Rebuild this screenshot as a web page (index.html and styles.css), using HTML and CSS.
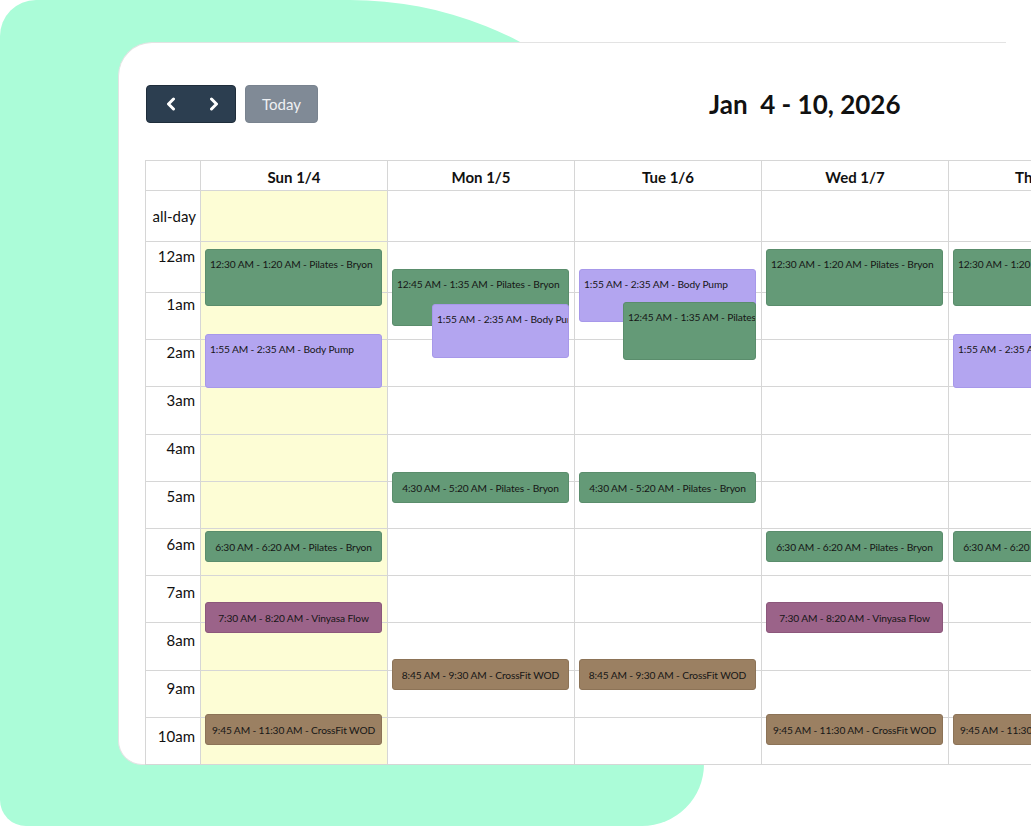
FILE: index.html
```html
<!DOCTYPE html>
<html lang="en">
<head>
<meta charset="utf-8">
<title>Week calendar</title>
<link rel="stylesheet" href="styles.css">
</head>
<body>
<div class="blob">
  <div class="card">
    <div class="toolbar">
      <div class="nav-group">
        <button class="nav-btn" aria-label="Previous week">
          <svg width="12" height="14" viewBox="0 0 12 14"><polyline points="8.5,2 3.5,7 8.5,12" fill="none" stroke="#fff" stroke-width="3" stroke-linecap="round" stroke-linejoin="round"/></svg>
        </button>
        <button class="nav-btn" aria-label="Next week">
          <svg width="12" height="14" viewBox="0 0 12 14"><polyline points="3.5,2 8.5,7 3.5,12" fill="none" stroke="#fff" stroke-width="3" stroke-linecap="round" stroke-linejoin="round"/></svg>
        </button>
      </div>
      <button class="today-btn">Today</button>
      <h2 class="title">Jan  4 - 10, 2026</h2>
    </div>

    <div class="cal">
      <div class="row head">
        <div class="cell axis"></div>
        <div class="cell">Sun 1/4</div>
        <div class="cell">Mon 1/5</div>
        <div class="cell">Tue 1/6</div>
        <div class="cell">Wed 1/7</div>
        <div class="cell">Thu 1/8</div>
        <div class="cell">Fri 1/9</div>
        <div class="cell">Sat 1/10</div>
      </div>
      <div class="row allday">
        <div class="cell axis">all-day</div>
        <div class="cell today"></div>
        <div class="cell"></div>
        <div class="cell"></div>
        <div class="cell"></div>
        <div class="cell"></div>
        <div class="cell"></div>
        <div class="cell"></div>
      </div>
      <div class="row body">
        <div class="axis-col">
          <div class="axis-lines">
            <div class="slot"></div><div class="slot"></div><div class="slot"></div><div class="slot"></div><div class="slot"></div><div class="slot"></div><div class="slot"></div><div class="slot"></div><div class="slot"></div><div class="slot"></div><div class="slot"></div>
          </div>
          <div class="axis-labels">
            <div class="label">12am</div>
            <div class="label">1am</div>
            <div class="label">2am</div>
            <div class="label">3am</div>
            <div class="label">4am</div>
            <div class="label">5am</div>
            <div class="label">6am</div>
            <div class="label">7am</div>
            <div class="label">8am</div>
            <div class="label">9am</div>
            <div class="label">10am</div>
          </div>
        </div>

        <div class="day today">
          <div class="slot"></div><div class="slot"></div><div class="slot"></div><div class="slot"></div><div class="slot"></div><div class="slot"></div><div class="slot"></div><div class="slot"></div><div class="slot"></div><div class="slot"></div><div class="slot"></div>
          <div class="event green tall" style="top:7px;height:57px;">12:30 AM - 1:20 AM - Pilates - Bryon</div>
          <div class="event purple tall" style="top:92px;height:54px;">1:55 AM - 2:35 AM - Body Pump</div>
          <div class="event green short" style="top:289px;">6:30 AM - 6:20 AM - Pilates - Bryon</div>
          <div class="event mauve short" style="top:360px;">7:30 AM - 8:20 AM - Vinyasa Flow</div>
          <div class="event brown short" style="top:472px;">9:45 AM - 11:30 AM - CrossFit WOD</div>
        </div>

        <div class="day">
          <div class="slot"></div><div class="slot"></div><div class="slot"></div><div class="slot"></div><div class="slot"></div><div class="slot"></div><div class="slot"></div><div class="slot"></div><div class="slot"></div><div class="slot"></div><div class="slot"></div>
          <div class="event green tall" style="top:27px;height:57px;">12:45 AM - 1:35 AM - Pilates - Bryon</div>
          <div class="event purple tall" style="top:62px;height:54px;left:44px;width:137px;">1:55 AM - 2:35 AM - Body Pump</div>
          <div class="event green short" style="top:230px;">4:30 AM - 5:20 AM - Pilates - Bryon</div>
          <div class="event brown short" style="top:417px;">8:45 AM - 9:30 AM - CrossFit WOD</div>
        </div>

        <div class="day">
          <div class="slot"></div><div class="slot"></div><div class="slot"></div><div class="slot"></div><div class="slot"></div><div class="slot"></div><div class="slot"></div><div class="slot"></div><div class="slot"></div><div class="slot"></div><div class="slot"></div>
          <div class="event purple tall" style="top:27px;height:53px;">1:55 AM - 2:35 AM - Body Pump</div>
          <div class="event green tall" style="top:60px;height:58px;left:48px;width:133px;">12:45 AM - 1:35 AM - Pilates - Bryon</div>
          <div class="event green short" style="top:230px;">4:30 AM - 5:20 AM - Pilates - Bryon</div>
          <div class="event brown short" style="top:417px;">8:45 AM - 9:30 AM - CrossFit WOD</div>
        </div>

        <div class="day">
          <div class="slot"></div><div class="slot"></div><div class="slot"></div><div class="slot"></div><div class="slot"></div><div class="slot"></div><div class="slot"></div><div class="slot"></div><div class="slot"></div><div class="slot"></div><div class="slot"></div>
          <div class="event green tall" style="top:7px;height:57px;">12:30 AM - 1:20 AM - Pilates - Bryon</div>
          <div class="event green short" style="top:289px;">6:30 AM - 6:20 AM - Pilates - Bryon</div>
          <div class="event mauve short" style="top:360px;">7:30 AM - 8:20 AM - Vinyasa Flow</div>
          <div class="event brown short" style="top:472px;">9:45 AM - 11:30 AM - CrossFit WOD</div>
        </div>

        <div class="day">
          <div class="slot"></div><div class="slot"></div><div class="slot"></div><div class="slot"></div><div class="slot"></div><div class="slot"></div><div class="slot"></div><div class="slot"></div><div class="slot"></div><div class="slot"></div><div class="slot"></div>
          <div class="event green tall" style="top:7px;height:57px;">12:30 AM - 1:20 AM - Pilates - Bryon</div>
          <div class="event purple tall" style="top:92px;height:54px;">1:55 AM - 2:35 AM - Body Pump</div>
          <div class="event green short" style="top:289px;">6:30 AM - 6:20 AM - Pilates - Bryon</div>
          <div class="event brown short" style="top:472px;">9:45 AM - 11:30 AM - CrossFit WOD</div>
        </div>

        <div class="day">
          <div class="slot"></div><div class="slot"></div><div class="slot"></div><div class="slot"></div><div class="slot"></div><div class="slot"></div><div class="slot"></div><div class="slot"></div><div class="slot"></div><div class="slot"></div><div class="slot"></div>
        </div>

        <div class="day">
          <div class="slot"></div><div class="slot"></div><div class="slot"></div><div class="slot"></div><div class="slot"></div><div class="slot"></div><div class="slot"></div><div class="slot"></div><div class="slot"></div><div class="slot"></div><div class="slot"></div>
        </div>
      </div>
    </div>
  </div>
</div>
</body>
</html>
```

FILE: styles.css
```css
html, body {
  margin: 0;
  padding: 0;
  width: 1031px;
  height: 827px;
  overflow: hidden;
  background: #ffffff;
  font-family: "Lato", "Open Sans", "Liberation Sans", sans-serif;
  color: #111;
}

.blob {
  width: 704px;
  height: 826px;
  background: #abfcd8;
  border-radius: 36px 354px 62px 26px / 36px 340px 62px 26px;
  padding-top: 42px;
  box-sizing: border-box;
}

.card {
  margin-left: 118px;
  width: 888px;
  height: 723px;
  box-sizing: border-box;
  background: #fff;
  border: 1px solid #e3e3e3;
  border-right: none;
  border-radius: 34px 0 0 24px;
  padding: 42px 0 0 26px;
}

.toolbar {
  display: flex;
  align-items: center;
  height: 38px;
  margin-bottom: 37px;
}

.nav-group {
  display: flex;
  width: 90px;
  height: 38px;
  margin-left: 1px;
  background: #2c3e50;
  border: 1px solid #1f2d3b;
  border-radius: 4px;
  box-sizing: border-box;
  overflow: hidden;
}

.nav-btn {
  flex: 1;
  border: none;
  background: transparent;
  padding: 0;
  display: flex;
  align-items: center;
  justify-content: center;
  cursor: pointer;
}

.nav-btn:first-child {
  padding-left: 2px;
}

.today-btn {
  margin-left: 9px;
  width: 73px;
  height: 38px;
  border: 1px solid #79838f;
  border-radius: 4px;
  background: #808a96;
  color: #eef0f3;
  font-family: inherit;
  font-size: 15px;
  padding: 0;
}

.title {
  margin: 0 0 0 391px;
  font-size: 26px;
  font-weight: 700;
  white-space: pre;
  color: #111;
}

.cal {
  width: 1365px;
  border-top: 1px solid #d6d6d6;
  border-left: 1px solid #d6d6d6;
  box-sizing: border-box;
}

.row {
  display: grid;
  grid-template-columns: 55px repeat(7, 187px);
}

.cell {
  border-right: 1px solid #d6d6d6;
  border-bottom: 1px solid #d6d6d6;
  box-sizing: border-box;
}

.head .cell {
  height: 30px;
  display: flex;
  align-items: center;
  justify-content: center;
  padding-top: 2px;
  font-weight: 700;
  font-size: 15px;
  color: #111;
}

.allday .cell {
  height: 51px;
}

.allday .cell.axis {
  display: flex;
  align-items: center;
  justify-content: flex-end;
  padding-right: 4px;
  font-size: 15px;
  color: #111;
}

.today {
  background: #fdfdd5;
}

.axis-col,
.day {
  border-right: 1px solid #d6d6d6;
  box-sizing: border-box;
}

.axis-col {
  display: grid;
  align-items: start;
}

.axis-lines,
.axis-labels {
  grid-area: 1 / 1;
}

.axis-labels {
  padding-top: 4px;
}

.label {
  height: 48px;
  line-height: 20px;
  text-align: right;
  padding-right: 5px;
  font-size: 15px;
  color: #111;
}

.label:last-child {
  height: 20px;
}

.day {
  position: relative;
}

.slot {
  height: 47.2px;
  border-bottom: 1px solid #d6d6d6;
  box-sizing: border-box;
}

.slot:first-child {
  height: 51px;
}

.event {
  position: absolute;
  left: 4px;
  width: 177px;
  box-sizing: border-box;
  border-radius: 3px;
  border: 1px solid transparent;
  font-size: 10.2px;
  letter-spacing: -0.12px;
  color: #161616;
  white-space: nowrap;
  overflow: hidden;
  line-height: 14px;
}

.event.tall {
  padding: 7px 0 0 4px;
}

.event.short {
  height: 31px;
  display: flex;
  align-items: center;
  justify-content: center;
}

.green {
  background: #649a77;
  border-color: #5a8d6c;
}

.purple {
  background: #b3a5f0;
  border-color: #a798ea;
}

.mauve {
  background: #9b6389;
  border-color: #8c577b;
}

.brown {
  background: #9b8062;
  border-color: #8c7357;
}
```
